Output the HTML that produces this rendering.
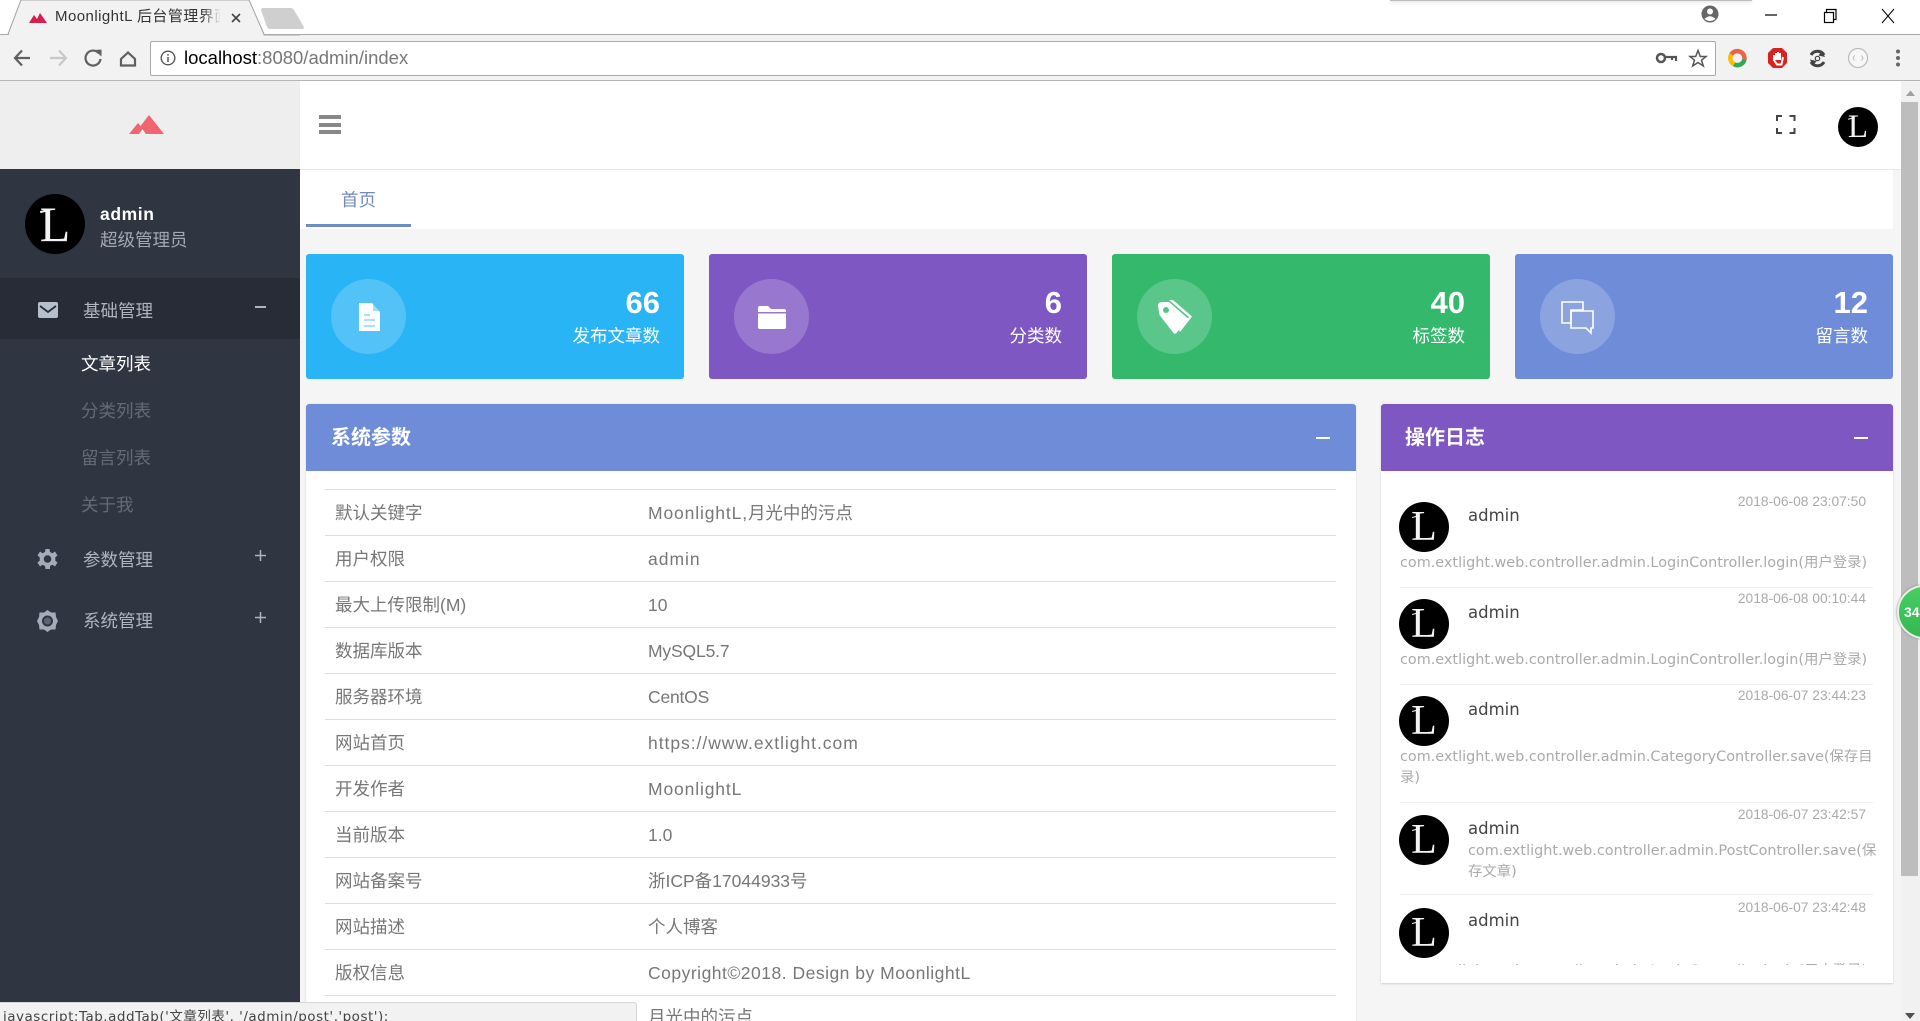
<!DOCTYPE html>
<html lang="zh"><head><meta charset="utf-8"><title>MoonlightL 后台管理界面</title>
<style>
html,body{margin:0;padding:0;width:1920px;height:1021px;overflow:hidden;background:#f5f5f5}
body{position:relative;font-family:"Liberation Sans","Noto Sans CJK SC",sans-serif;color:#777}
.a{position:absolute}
.t{position:absolute;white-space:nowrap;line-height:30px;height:30px}
svg{position:absolute;overflow:visible}
.av{position:absolute;border-radius:50%;background:#000;color:#f4f4f4;text-align:center;font-family:"Liberation Serif",serif;font-weight:400}
.av::before{content:"";position:absolute;left:25%;top:27%;width:16%;height:2.5%;background:#f4f4f4;transform:rotate(-14deg)}
.card{position:absolute;top:254px;width:378px;height:125px;border-radius:3px}
.circ{position:absolute;top:279px;width:75px;height:75px;border-radius:50%;background:rgba(255,255,255,.2)}
.num{position:absolute;top:285px;height:36px;line-height:36px;font-size:31px;font-weight:700;color:#fff;text-align:right}
.lab{position:absolute;top:321px;height:30px;line-height:30px;font-size:17.5px;color:#fff;text-align:right;white-space:nowrap}
.ln{position:absolute;left:325px;width:1011px;height:1px;background:#ddd}
.k{position:absolute;left:335px;font-size:17.5px;line-height:30px;color:#777;white-space:nowrap}
.v{position:absolute;left:648px;font-size:17.5px;line-height:30px;color:#777;white-space:nowrap}
.sm{position:absolute;font-size:17.5px;line-height:30px;white-space:nowrap}
.date{position:absolute;right:54px;font-size:13.8px;line-height:20px;color:#aaa;white-space:nowrap}
.un{position:absolute;left:1468px;font-family:"DejaVu Sans",sans-serif;font-size:16.5px;line-height:24px;color:#444;white-space:nowrap;margin-top:1px}
.desc{position:absolute;left:1400px;font-family:"DejaVu Sans","Noto Sans CJK SC",sans-serif;font-size:14.4px;line-height:21px;color:#aaa;white-space:nowrap;margin-top:1px}
.sep{position:absolute;left:1400px;width:473px;height:1px;background:#eee}
</style></head><body>

<!-- browser chrome -->
<div class="a" style="left:0;top:0;width:1920px;height:34px;background:#fff"></div>
<div class="a" style="left:0;top:34px;width:1920px;height:46px;background:#f2f2f2"></div>
<div class="a" style="left:0;top:34px;width:1920px;height:1px;background:#a8a8a8"></div>
<div class="a" style="left:0;top:80px;width:1920px;height:1px;background:#b5b5b5"></div>
<svg style="left:0;top:0" width="300" height="36"><path d="M0 34.5H8L21 0H249L264 35H300" fill="none" stroke="#a8a8a8"/><path d="M8.5 36L21 .5H249L264 36Z" fill="#f2f2f2"/><path d="M8 34L21 0M249 0L264 34" fill="none" stroke="#a8a8a8"/><path d="M29 23L34 15L37 19L40 13L47 23Z" fill="#d81e4f"/><path d="M232 14L240 22M240 14L232 22" stroke="#444" stroke-width="1.6"/><path d="M261 10Q261 8 263 8H291Q293 8 294 10L304 27Q304 29 302 29H270Q268 29 267 27Z" fill="#cfcfcf"/></svg>
<div class="t" style="left:55px;top:2px;width:165px;overflow:hidden;font-size:15px;letter-spacing:.45px;color:#333">MoonlightL 后台管理界面</div>
<div class="a" style="left:202px;top:6px;width:19px;height:24px;background:linear-gradient(90deg,rgba(242,242,242,0),#f2f2f2)"></div>

<div class="a" style="left:1390px;top:0;width:362px;height:1px;background:#bbb;box-shadow:0 1px 3px #bbb"></div>
<svg style="left:1700px;top:4px" width="20" height="20"><circle cx="10" cy="10" r="8.5" fill="#666"/><circle cx="10" cy="7.5" r="3" fill="#fff"/><path d="M4.5 15Q10 9.5 15.5 15Q10 19 4.5 15Z" fill="#fff"/></svg>
<svg style="left:1760px;top:8px" width="150" height="20"><path d="M5 7H17" stroke="#000" stroke-width="1.2"/><rect x="64.5" y="4.5" width="9" height="10" fill="none" stroke="#000" stroke-width="1.2"/><path d="M66.5 4V1.5H76V11.5H74" fill="none" stroke="#000" stroke-width="1.2"/><path d="M122 1L134 15M134 1L122 15" stroke="#000" stroke-width="1"/></svg>

<svg style="left:0;top:40px" width="150" height="36"><g fill="none" stroke="#5f5f5f" stroke-width="2.2"><path d="M30 18H15M22 10.5L15 18L22 25.5"/><path d="M66 18H50M59 10.5L66 18L59 25.5" stroke="#c8c8c8"/><path d="M99 13.5A7.5 7.5 0 1 0 100.5 19"/><path d="M128 12.5L121 19V25.5H135V19Z"/></g><path d="M94 10L101.5 9.5V16.5Z" fill="#5f5f5f"/></svg>
<div class="a" style="left:150px;top:41px;width:1564px;height:33px;background:#fff;border:1px solid #aaa;border-radius:2px"></div>
<svg style="left:160px;top:50px" width="16" height="16"><circle cx="8" cy="8" r="6.8" fill="none" stroke="#555" stroke-width="1.4"/><path d="M8 7V12M8 4V5.6" stroke="#555" stroke-width="1.5"/></svg>
<div class="t" style="left:184px;top:43px;font-size:18.5px;color:#000">localhost<span style="color:#777">:8080/admin/index</span></div>
<svg style="left:1655px;top:48px" width="60" height="20"><circle cx="6" cy="10" r="4" fill="none" stroke="#555" stroke-width="2.5"/><path d="M10 9H21V13M17 9V12" fill="none" stroke="#555" stroke-width="2.2"/><path d="M43 2.5L45.3 8.5H51L46.5 12.2L48.3 18L43 14.5L37.7 18L39.5 12.2L35 8.5H40.7Z" fill="none" stroke="#555" stroke-width="1.5"/></svg>
<svg style="left:1725px;top:46px" width="190" height="24"><path d="M6.3 8.4A7.2 7.2 0 0 0 9 18.3" fill="none" stroke="#fbbc05" stroke-width="4.5"/><path d="M9 18.3A7.2 7.2 0 0 0 19.5 13" fill="none" stroke="#34a853" stroke-width="4.5"/><path d="M19.5 13A7.2 7.2 0 0 0 6.3 8.4" fill="none" stroke="#e8654a" stroke-width="4.5"/><path d="M48 2H57L62 7V17L57 22H48L43 17V7Z" fill="#d9211e"/><path d="M49 9V15M51 7V14M53 6V14M55 7V14M49 14L52 18.5H56.5L58 11" stroke="#fff" stroke-width="2" fill="none"/><path d="M86 9A7.5 7.5 0 0 1 99 9M99 16A7.5 7.5 0 0 1 86 16" fill="none" stroke="#444" stroke-width="3"/><path d="M97 4.5L100 11L93.5 9.5ZM88 20L85 13.5L91.5 15Z" fill="#444"/><circle cx="92.5" cy="12.5" r="2.2" fill="none" stroke="#444" stroke-width="1.2"/><circle cx="133" cy="12" r="9.5" fill="#f7f7f7" stroke="#bbb" stroke-width="1.2"/><path d="M129.5 9.5L128 12L129.5 14.5M136.5 9.5L138 12L136.5 14.5" fill="none" stroke="#bbb"/><circle cx="173" cy="5.5" r="2" fill="#666"/><circle cx="173" cy="12" r="2" fill="#666"/><circle cx="173" cy="18.5" r="2" fill="#666"/></svg>

<!-- scrollbar -->
<div class="a" style="left:1893px;top:81px;width:27px;height:940px;background:#f5f5f5"></div>
<div class="a" style="left:1901px;top:81px;width:19px;height:940px;background:#f1f1f1"></div>
<div class="a" style="left:1901px;top:102px;width:17px;height:774px;background:#bdbdbd"></div>
<svg style="left:1901px;top:86px" width="19" height="12"><path d="M5 10L9.5 4.5L14 10Z" fill="#a0a0a0"/></svg>
<svg style="left:1901px;top:1010px" width="19" height="11"><path d="M4 3H14L9 9Z" fill="#505050"/></svg>

<!-- logo -->
<div class="a" style="left:0;top:81px;width:300px;height:88px;background:#eeeeee"></div>
<svg style="left:129px;top:115px" width="36" height="20"><path d="M0 19L9 8L11.5 11L20 0L35 19H17L13.5 14L10 19Z" fill="#f0656f"/></svg>

<!-- sidebar -->
<div class="a" style="left:0;top:169px;width:300px;height:852px;background:#2f3541"></div>
<div class="av" style="left:25px;top:194px;width:60px;height:60px;font-size:50px;line-height:60px">L</div>
<div class="t" style="left:100px;top:199px;font-size:17.5px;font-weight:700;letter-spacing:.6px;color:#fff">admin</div>
<div class="t" style="left:100px;top:225px;font-size:17.5px;color:#a3a9b3">超级管理员</div>
<div class="a" style="left:0;top:278px;width:300px;height:61px;background:#282c36"></div>
<svg style="left:38px;top:302px" width="20" height="16"><rect width="20" height="16" rx="2" fill="#b6bfcd"/><path d="M2 4L10 10L18 4" fill="none" stroke="#282c36" stroke-width="1.8"/></svg>
<div class="sm" style="left:83px;top:296px;color:#aeb5c1">基础管理</div>
<div class="a" style="left:255px;top:306px;width:11px;height:1.5px;background:#aeb5c1"></div>
<div class="sm" style="left:81px;top:349px;color:#fff">文章列表</div>
<div class="sm" style="left:81px;top:396px;color:#646b77">分类列表</div>
<div class="sm" style="left:81px;top:443px;color:#646b77">留言列表</div>
<div class="sm" style="left:81px;top:490px;color:#646b77">关于我</div>
<svg style="left:37px;top:548px" width="21" height="22"><path d="M8.5 1H12.5L13 4L15.5 5.2L18 3.5L20.5 7.5L18.3 9.3V12.7L20.5 14.5L18 18.5L15.5 16.8L13 18V21H8.5L8 18L5.5 16.8L3 18.5L.5 14.5L2.7 12.7V9.3L.5 7.5L3 3.5L5.5 5.2L8 4Z" fill="#a3acbb"/><circle cx="10.5" cy="11" r="3.8" fill="#2f3541"/></svg>
<div class="sm" style="left:83px;top:545px;color:#aeb5c1">参数管理</div>
<svg style="left:255px;top:550px" width="12" height="12"><path d="M0 5.5H11M5.5 0V11" stroke="#aeb5c1" stroke-width="1.5"/></svg>
<svg style="left:37px;top:610px" width="21" height="22"><path d="M10.5 0L14 2.5H18.5L19 7L21 11L19 15L18.5 19.5H14L10.5 22L7 19.5H2.5L2 15L0 11L2 7L2.5 2.5H7Z" fill="#a3acbb"/><circle cx="10.5" cy="11" r="5.5" fill="#2f3541"/><circle cx="10.5" cy="11" r="3.5" fill="#a3acbb" fill-opacity=".4"/></svg>
<div class="sm" style="left:83px;top:606px;color:#aeb5c1">系统管理</div>
<svg style="left:255px;top:612px" width="12" height="12"><path d="M0 5.5H11M5.5 0V11" stroke="#aeb5c1" stroke-width="1.5"/></svg>

<!-- header -->
<div class="a" style="left:300px;top:81px;width:1601px;height:88px;background:#fff;border-bottom:1px solid #e8e8e8"></div>
<div class="a" style="left:319px;top:115px;width:22px;height:4px;background:#888"></div>
<div class="a" style="left:319px;top:122.5px;width:22px;height:4px;background:#888"></div>
<div class="a" style="left:319px;top:130px;width:22px;height:4px;background:#888"></div>
<svg style="left:1776px;top:115px" width="20" height="19"><path d="M1 6V1H6M13.5 1H18.5V6M18.5 13V18H13.5M6 18H1V13" fill="none" stroke="#444" stroke-width="2"/></svg>
<div class="av" style="left:1838px;top:107px;width:40px;height:40px;font-size:33px;line-height:40px">L</div>

<!-- tabs -->
<div class="a" style="left:300px;top:170px;width:1593px;height:59px;background:#fff"></div>
<div class="t" style="left:341px;top:185px;font-size:17.5px;color:#7089bf">首页</div>
<div class="a" style="left:306px;top:224px;width:105px;height:3px;background:#6f8cc4"></div>

<!-- cards -->
<div class="card" style="left:306px;background:#29b4f6"></div>
<div class="card" style="left:709px;background:#7e57c2"></div>
<div class="card" style="left:1112px;background:#33b86c"></div>
<div class="card" style="left:1515px;background:#6f8cd8"></div>
<div class="circ" style="left:331px"></div><div class="circ" style="left:734px"></div><div class="circ" style="left:1137px"></div><div class="circ" style="left:1540px"></div>
<svg style="left:358px;top:303px" width="23" height="29"><path d="M1 0H14L22 9V28H1Z" fill="#fff"/><path d="M15 1V8H21" fill="#29b4f6" fill-opacity=".45"/><path d="M6 12H12M6 17H17M6 23H17" stroke="#56c3f6" stroke-width="1"/></svg>
<svg style="left:757px;top:305px" width="30" height="25"><path d="M1 3Q1 1 3 1H11L14 4H27Q29 4 29 6V7H1ZM1 8.5H29V22Q29 24 27 24H3Q1 24 1 22Z" fill="#fff"/></svg>
<svg style="left:1157px;top:300px" width="36" height="35"><path d="M12 0H16L35 16.5L23 32L22 30L32 17Z" fill="#fff"/><path d="M1 6Q1 2 5 2H12L31 18.5L19 33.5Q18 34.5 16.5 33L2.5 15Z" fill="#fff"/><circle cx="9" cy="10" r="3" fill="#5dc287"/></svg>
<svg style="left:1561px;top:301px" width="33" height="32"><path d="M1 1H22V9H10V22H1Z" fill="none" stroke="#fff" stroke-width="1.6"/><path d="M10 10H32V27H30V32L25 27H10Z" fill="none" stroke="#fff" stroke-width="1.6"/></svg>
<div class="num" style="left:560px;width:100px">66</div><div class="lab" style="left:510px;width:150px">发布文章数</div>
<div class="num" style="left:962px;width:100px">6</div><div class="lab" style="left:912px;width:150px">分类数</div>
<div class="num" style="left:1365px;width:100px">40</div><div class="lab" style="left:1315px;width:150px">标签数</div>
<div class="num" style="left:1768px;width:100px">12</div><div class="lab" style="left:1718px;width:150px">留言数</div>

<!-- system panel -->
<div class="a" style="left:306px;top:404px;width:1050px;height:617px;background:#fff;box-shadow:0 0 2px rgba(0,0,0,.12)"></div>
<div class="a" style="left:306px;top:404px;width:1050px;height:67px;background:#6f8cd8;border-radius:3px 3px 0 0"></div>
<div class="t" style="left:331px;top:423px;font-size:20px;font-weight:700;color:#fff">系统参数</div>
<div class="a" style="left:1316px;top:437px;width:14px;height:2px;background:#fff"></div>
<div class="ln" style="top:489px"></div><div class="ln" style="top:535px"></div><div class="ln" style="top:581px"></div><div class="ln" style="top:627px"></div><div class="ln" style="top:673px"></div><div class="ln" style="top:719px"></div><div class="ln" style="top:765px"></div><div class="ln" style="top:811px"></div><div class="ln" style="top:857px"></div><div class="ln" style="top:903px"></div><div class="ln" style="top:949px"></div><div class="ln" style="top:995px"></div>
<div class="k" style="top:498px">默认关键字</div><div class="v" style="top:498px"><span style="letter-spacing:.86px">MoonlightL,</span>月光中的污点</div>
<div class="k" style="top:544px">用户权限</div><div class="v" style="top:544px;letter-spacing:1px">admin</div>
<div class="k" style="top:590px">最大上传限制(M)</div><div class="v" style="top:590px">10</div>
<div class="k" style="top:636px">数据库版本</div><div class="v" style="top:636px;letter-spacing:-.15px">MySQL5.7</div>
<div class="k" style="top:682px">服务器环境</div><div class="v" style="top:682px;letter-spacing:-.2px">CentOS</div>
<div class="k" style="top:728px">网站首页</div><div class="v" style="top:728px;letter-spacing:.96px">https://www.extlight.com</div>
<div class="k" style="top:774px">开发作者</div><div class="v" style="top:774px;letter-spacing:.86px">MoonlightL</div>
<div class="k" style="top:820px">当前版本</div><div class="v" style="top:820px">1.0</div>
<div class="k" style="top:866px">网站备案号</div><div class="v" style="top:866px">浙ICP备17044933号</div>
<div class="k" style="top:912px">网站描述</div><div class="v" style="top:912px">个人博客</div>
<div class="k" style="top:958px">版权信息</div><div class="v" style="top:958px;letter-spacing:.5px">Copyright©2018. Design by MoonlightL</div>
<div class="v" style="top:1002px">月光中的污点</div>

<!-- log panel -->
<div class="a" style="left:1381px;top:404px;width:512px;height:579px;background:#fff;box-shadow:0 1px 2px rgba(0,0,0,.15)"></div>
<div class="a" style="left:1381px;top:404px;width:512px;height:67px;background:#7e57c2;border-radius:3px 3px 0 0"></div>
<div class="t" style="left:1405px;top:423px;font-size:20px;font-weight:700;color:#fff">操作日志</div>
<div class="a" style="left:1854px;top:437px;width:14px;height:2px;background:#fff"></div>

<div class="av" style="left:1399px;top:502px;width:50px;height:50px;font-size:42px;line-height:50px">L</div>
<div class="un" style="top:503px">admin</div><div class="date" style="top:492px">2018-06-08 23:07:50</div>
<div class="desc" style="top:552px">com.extlight.web.controller.admin.LoginController.login(用户登录)</div>
<div class="sep" style="top:587px"></div>
<div class="av" style="left:1399px;top:599px;width:50px;height:50px;font-size:42px;line-height:50px">L</div>
<div class="un" style="top:600px">admin</div><div class="date" style="top:589px">2018-06-08 00:10:44</div>
<div class="desc" style="top:649px">com.extlight.web.controller.admin.LoginController.login(用户登录)</div>
<div class="sep" style="top:684px"></div>
<div class="av" style="left:1399px;top:696px;width:50px;height:50px;font-size:42px;line-height:50px">L</div>
<div class="un" style="top:697px">admin</div><div class="date" style="top:686px">2018-06-07 23:44:23</div>
<div class="desc" style="top:746px">com.extlight.web.controller.admin.CategoryController.save(保存目<br>录)</div>
<div class="sep" style="top:802px"></div>
<div class="av" style="left:1399px;top:815px;width:50px;height:50px;font-size:42px;line-height:50px">L</div>
<div class="un" style="top:816px">admin</div><div class="date" style="top:805px">2018-06-07 23:42:57</div>
<div class="desc" style="left:1468px;top:840px">com.extlight.web.controller.admin.PostController.save(保<br>存文章)</div>
<div class="sep" style="top:894px"></div>
<div class="av" style="left:1399px;top:908px;width:50px;height:50px;font-size:42px;line-height:50px">L</div>
<div class="un" style="top:908px">admin</div><div class="date" style="top:898px">2018-06-07 23:42:48</div>
<div class="a" style="left:1400px;top:958px;width:470px;height:7px;overflow:hidden"><div class="desc" style="left:0;top:2px">com.extlight.web.controller.admin.LoginController.login(用户登录)</div></div>

<!-- green badge -->
<div class="a" style="left:1897px;top:585px;width:54px;height:54px;box-sizing:border-box;border-radius:50%;background:linear-gradient(#46cf62,#35b751);border:2px solid #e6efe6;box-shadow:0 0 2px #777"></div>
<div class="t" style="left:1904px;top:597px;font-size:14px;font-weight:700;color:#fff">34</div>

<!-- status bubble -->
<div class="a" style="left:0;top:1002px;width:637px;height:19px;background:#f2f2f2;border-top:1px solid #d5d5d5;border-right:1px solid #d5d5d5;border-top-right-radius:3px;box-sizing:border-box"></div>
<div class="a" style="left:3px;top:1006px;font-family:'DejaVu Sans','Noto Sans CJK SC',sans-serif;font-size:13.5px;letter-spacing:.5px;line-height:22px;height:15px;overflow:hidden;color:#444;white-space:nowrap">javascript:Tab.addTab('文章列表', '/admin/post','post');</div>
</body></html>
